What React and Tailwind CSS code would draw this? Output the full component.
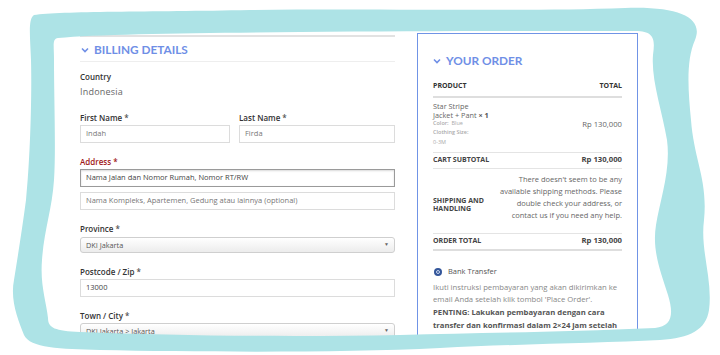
import React from 'react';

const body = { fontFamily: '"Open Sans", "Liberation Sans", sans-serif' };
const head = { fontFamily: 'Lato, "Open Sans", sans-serif' };

const Chevron = () => (
  <svg width="8" height="6" viewBox="0 0 8 6" className="shrink-0">
    <path d="M1 1.5 L4 4.5 L7 1.5" fill="none" stroke="#6f8fe6" strokeWidth="1.6" />
  </svg>
);

const Label = ({ children, red }) => (
  <div className={`text-[8px] leading-[12px] font-semibold ${red ? 'text-[#a01818]' : 'text-[#333]'}`}>
    {children} <span className={red ? 'text-[#a01818]' : 'text-[#555]'}>*</span>
  </div>
);

const Input = ({ value, dark, focus }) => (
  <div
    className={`h-[18px] flex items-center px-[5px] text-[7.5px] whitespace-nowrap bg-white border ${
      focus ? 'border-[#9a9a9a] shadow-[inset_0_1px_2px_rgba(0,0,0,0.15)]' : 'border-[#dcdcdc]'
    } ${dark ? 'text-[#444]' : 'text-[#777]'}`}
  >
    {value}
  </div>
);

const Select = ({ value }) => (
  <div className="h-[16px] flex items-center justify-between px-[5px] text-[7.3px] text-[#555] rounded-[3px] border border-[#cfcfcf] bg-gradient-to-b from-white to-[#ececec]">
    <span>{value}</span>
    <span className="text-[5px] text-[#666]">▼</span>
  </div>
);

const Row = ({ left, right, border = 'border-b border-[#e4e4e4]' }) => (
  <div className={`flex items-center justify-between h-[16px] ${border}`}>
    <span className="text-[7px] font-bold uppercase text-[#444]">{left}</span>
    <span className="text-[7.7px] font-bold text-[#444]">{right}</span>
  </div>
);

function Frame() {
  return (
    <svg className="absolute inset-0 pointer-events-none" width="720" height="355" viewBox="0 0 720 355">
      <path
        fillRule="evenodd"
        fill="#ade3e6"
        d="M34 15 C60 11 150 12 250 10 C380 8 520 12 625 8 C680 6 704 18 695 40 C686 60 688 90 691 120 C694 160 708 180 704 220 C700 250 713 280 709 310 C706 330 690 338 660 340 C600 343 520 344 440 348 C340 353 200 352 100 350 C60 349 30 348 24 335 C18 320 10 300 14 280 C18 255 22 230 26 200 C30 160 32 100 31 60 C30 35 28 19 34 15 Z
        M58 38 C100 34 200 33 300 32 C420 31 540 31 635 31 C655 31 655 40 653 55 C651 80 662 110 667 140 C671 170 660 200 656 225 C652 250 660 270 668 295 C674 315 672 326 655 328 C560 332 480 333 400 335 C300 337 180 336 80 332 C55 331 48 328 48 318 C46 300 40 285 42 260 C44 230 52 210 54 180 C56 150 54 100 54 60 C54 45 52 39 58 38 Z"
      />
    </svg>
  );
}

export default function App() {
  return (
    <div className="relative w-[720px] h-[355px] overflow-hidden bg-white" style={body}>
      <div className="flex pl-[80px] pt-[33px] gap-[22px]">
        {/* billing */}
        <div className="w-[315px] mt-[2px] border-t-2 border-[#e2e2e2]">
          <div className="h-[25px] flex items-center gap-[5px] border-b border-[#eeeeee] pl-[1px] pt-[2px]">
            <Chevron />
            <span className="text-[11.8px] font-bold text-[#6f8fe6]" style={head}>
              BILLING DETAILS
            </span>
          </div>
          <div className="mt-[9px] text-[8px] leading-[12px] font-semibold text-[#333]">Country</div>
          <div className="mt-[2px] text-[9px] leading-[14px] text-[#666] tracking-[0.2px]">Indonesia</div>

          <div className="mt-[13px] flex gap-[9px]">
            <div className="w-[150px]">
              <Label>First Name</Label>
              <div className="mt-[1px]"><Input value="Indah" /></div>
            </div>
            <div className="flex-1">
              <Label>Last Name</Label>
              <div className="mt-[1px]"><Input value="Firda" /></div>
            </div>
          </div>

          <div className="mt-[13px]">
            <Label red>Address</Label>
            <div className="mt-[1px]"><Input value="Nama Jalan dan Nomor Rumah, Nomor RT/RW" dark focus /></div>
            <div className="mt-[5px]"><Input value="Nama Kompleks, Apartemen, Gedung atau lainnya (optional)" /></div>
          </div>

          <div className="mt-[13px]">
            <Label>Province</Label>
            <div className="mt-[2px]"><Select value="DKI Jakarta" /></div>
          </div>

          <div className="mt-[13px]">
            <Label>Postcode / Zip</Label>
            <div className="mt-[1px]"><Input value="13000" dark /></div>
          </div>

          <div className="mt-[13px]">
            <Label>Town / City</Label>
            <div className="mt-[1px]"><Select value="DKI Jakarta > Jakarta" /></div>
          </div>
        </div>

        {/* order */}
        <div className="w-[221px] h-[303px] overflow-hidden border-[1.5px] border-[#7094e6] px-[15px]">
          <div className="mt-[18px] flex items-center gap-[5px]">
            <Chevron />
            <span className="text-[11.8px] font-bold text-[#6f8fe6]" style={head}>
              YOUR ORDER
            </span>
          </div>
          <div className="mt-[8px] flex justify-between h-[18px] items-center text-[7px] font-bold text-[#333] border-b-2 border-[#dedede] box-content">
            <span>PRODUCT</span>
            <span>TOTAL</span>
          </div>
          <div className="flex items-center justify-between border-b border-[#e4e4e4] pt-[4.5px] pb-[4.5px]">
            <div className="whitespace-nowrap">
              <div className="text-[7.3px] leading-[8.5px] text-[#666]">Star Stripe</div>
              <div className="text-[7.3px] leading-[8.5px] text-[#666]">
                Jacket + Pant <span className="font-bold text-[#555]">× 1</span>
              </div>
              <div className="text-[5.5px] leading-[9.3px] text-[#aaa]">
                <span className="font-semibold">Color:</span> &nbsp;Blue
              </div>
              <div className="text-[5.5px] leading-[9.3px] text-[#aaa] font-semibold">Clothing Size:</div>
              <div className="text-[5.5px] leading-[9.3px] text-[#aaa]">0-3M</div>
            </div>
            <span className="text-[7.7px] text-[#666]">Rp 130,000</span>
          </div>
          <Row left="Cart Subtotal" right="Rp 130,000" />
          <div className="flex justify-between border-b border-[#e4e4e4] h-[65px]">
            <span className="self-center mt-[9px] text-[7px] leading-[8px] font-bold text-[#444]">
              SHIPPING AND
              <br />
              HANDLING
            </span>
            <span className="pt-[4px] text-[7.5px] leading-[12px] text-[#666] text-right whitespace-nowrap">
              There doesn't seem to be any
              <br />
              available shipping methods. Please
              <br />
              double check your address, or
              <br />
              contact us if you need any help.
            </span>
          </div>
          <Row left="Order Total" right="Rp 130,000" border="border-b-2 border-[#dedede] h-[17px]" />

          <div className="mt-[16px] h-[10px] flex items-center gap-[6px] pl-[1px]">
            <span className="w-[8px] h-[8px] rounded-full bg-[#34569a] flex items-center justify-center">
              <span className="w-[4px] h-[4px] rounded-full border border-[#c9d6ee] bg-[#34569a]" />
            </span>
            <span className="text-[7.5px] text-[#555]">Bank Transfer</span>
          </div>
          <div className="mt-[4px] text-[7.7px] leading-[12.7px] text-[#888] whitespace-nowrap">
            Ikuti instruksi pembayaran yang akan dikirimkan ke
            <br />
            email Anda setelah klik tombol 'Place Order'.
            <br />
            <span className="font-bold text-[#555]">
              PENTING: Lakukan pembayaran dengan cara
              <br />
              transfer dan konfirmasi dalam 2×24 jam setelah
            </span>
          </div>
        </div>
      </div>
      <Frame />
    </div>
  );
}
